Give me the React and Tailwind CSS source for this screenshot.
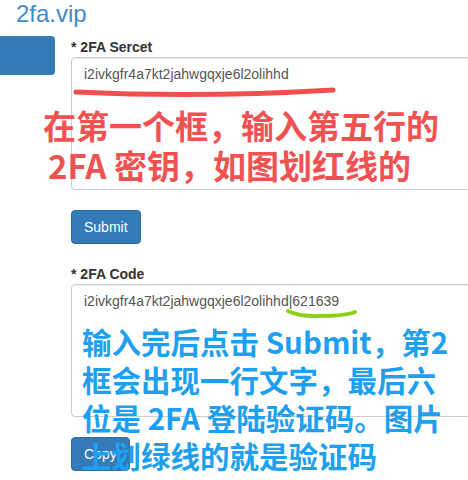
import React from 'react';

const cjk = "font-['Noto_Sans_CJK_SC','Noto_Sans',sans-serif]";

function Field({ label, value, className = '' }) {
  return (
    <div className={className}>
      <label className="block h-5 text-[14px] leading-5 font-bold text-[#333]">* {label}</label>
      <textarea
        readOnly
        value={value}
        className="block w-[420px] h-[133px] resize-none rounded border border-[#ccc] px-3 py-[6px] text-[14px] leading-5 text-[#555] shadow-[inset_0_1px_1px_rgba(0,0,0,0.075)] outline-none"
      />
    </div>
  );
}

export default function App() {
  const secret = 'i2ivkgfr4a7kt2jahwgqxje6l2olihhd';

  return (
    <div className="relative w-[468px] h-[480px] overflow-hidden bg-white font-['Liberation_Sans',Arial,sans-serif]">
      <div className="pl-4 h-7 text-[24px] leading-7 text-[#428bca]">2fa.vip</div>

      <div className="flex mt-2">
        <div className="w-[71px] shrink-0">
          <div className="w-[55px] h-[39px] bg-[#337ab7] rounded-r" />
        </div>

        <div className="pt-px">
          <Field label="2FA Sercet" value={secret} />
          <button className="mt-[20px] h-[34px] px-3 rounded bg-[#337ab7] border border-[#2e6da4] text-white text-[14px] leading-5">
            Submit
          </button>

          <Field label="2FA Code" value={`${secret}|621639`} className="mt-5" />
          <button className="mt-[20px] h-[34px] px-3 rounded bg-[#337ab7] border border-[#2e6da4] text-white text-[14px] leading-5">
            Copy
          </button>
        </div>
      </div>

      {/* hand-drawn underlines */}
      <svg className="absolute inset-0 pointer-events-none" width="468" height="480">
        <path d="M76 92 Q200 98 333 90" fill="none" stroke="#ef4f4f" strokeWidth="5" strokeLinecap="round" />
        <path d="M288 311 Q300 317 320 316 Q345 316 355 312" fill="none" stroke="#8cd01a" strokeWidth="4" strokeLinecap="round" />
      </svg>

      {/* red note */}
      <div className={`absolute left-[43px] top-[105px] ${cjk} font-bold text-[33px] leading-[40px] text-[#f05252] whitespace-nowrap`}>
        <div>在第一个框，输入第五行的</div>
        <div className="pl-[5px]">2FA 密钥，如图划红线的</div>
      </div>

      {/* blue note */}
      <div className={`absolute left-[82px] top-[322px] ${cjk} font-bold text-[29.5px] leading-[38px] text-[#1f9ff0] whitespace-nowrap`}>
        <div>输入完后点击 Submit，第2</div>
        <div>框会出现一行文字，最后六</div>
        <div>位是 2FA 登陆验证码。图片</div>
        <div>上划绿线的就是验证码</div>
      </div>
    </div>
  );
}
